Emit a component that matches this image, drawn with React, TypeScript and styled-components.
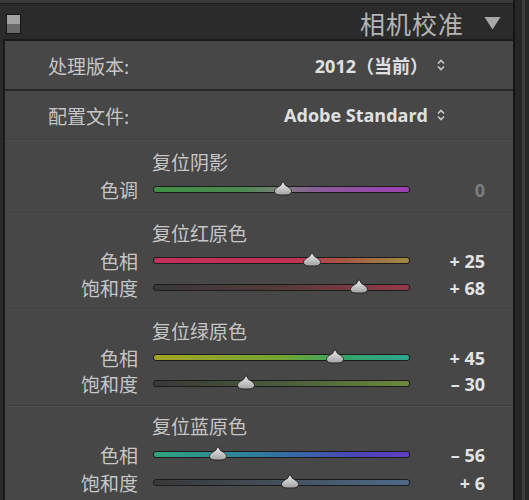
import React from 'react';
import styled, { createGlobalStyle } from 'styled-components';

const Global = createGlobalStyle`
  html, body { margin: 0; padding: 0; background: #2a2a2a; }
  body { width: 529px; height: 500px; overflow: hidden; font-family: "Noto Sans CJK SC", "Noto Sans", sans-serif; }
`;

const Frame = styled.div`
  width: 529px;
  height: 500px;
  display: flex;
  background: #2a2a2a;
  overflow: hidden;
`;

const Main = styled.div`
  width: 513px;
  display: flex;
  flex-direction: column;
`;

const Gutter = styled.div`
  flex: 1;
  background: #262626;
  border-left: 2px solid #151515;
  display: flex;
  justify-content: center;
`;

const GutterStripe = styled.div`
  width: 3px;
  margin-left: 2px;
  background: #3c3c3c;
`;

const TopStrip = styled.div`
  height: 3px;
  background: #3a3a3a;
  border-bottom: 1px solid #1c1c1c;
`;

const Header = styled.div`
  height: 35px;
  display: flex;
  align-items: center;
  padding: 0 8px 0 6px;
  background: #2b2b2b;
`;

const PanelIcon = styled.div`
  width: 13px;
  height: 18px;
  border: 1px solid #161616;
  display: flex;
  flex-direction: column;
  margin-top: 4px;
`;

const IconHalf = styled.div<{ $tone: string }>`
  flex: 1;
  background: ${(p) => p.$tone};
`;

const Title = styled.div`
  margin-left: auto;
  padding-top: 4px;
  font-size: 25px;
  line-height: 31px;
  color: #b4b4b4;
  letter-spacing: 1px;
`;

const Collapse = styled.svg`
  width: 17px;
  height: 14px;
  margin-left: 20px;
  margin-right: 4px;
  margin-top: 2px;
`;

const Panel = styled.div`
  flex: 1;
  margin-left: 3px;
  border-left: 2px solid #1a1a1a;
  border-top: 2px solid #1a1a1a;
  background: #474747;
  display: flex;
  flex-direction: column;
`;

const SettingRow = styled.div<{ $line: string }>`
  height: 48px;
  display: flex;
  align-items: center;
  justify-content: space-between;
  padding: 0 68px 0 43px;
  border-bottom: ${(p) => p.$line};
`;

const Label = styled.div`
  font-size: 19px;
  color: #c6c6c6;
`;

const Value = styled.div`
  display: flex;
  align-items: center;
  gap: 9px;
  font-family: "Open Sans", "Noto Sans CJK SC", sans-serif;
  font-weight: 700;
  font-size: 18px;
  color: #e0e0e0;
`;

const Stepper = styled.svg`
  width: 8px;
  height: 12px;
`;

const Section = styled.div<{ $top: number; $gap: number; $bottom: number; $last?: boolean }>`
  padding-top: ${(p) => p.$top}px;
  padding-bottom: ${(p) => p.$bottom}px;
  display: flex;
  flex-direction: column;
  gap: ${(p) => p.$gap}px;
  border-bottom: ${(p) => (p.$last ? 'none' : '1px solid #3e3e3e')};
  box-shadow: inset 0 1px 0 #4f4f4f;
`;

const SectionTitle = styled.div`
  height: 26px;
  line-height: 26px;
  padding-left: 147px;
  font-size: 19px;
  color: #c6c6c6;
`;

const SliderList = styled.div<{ $gap: number }>`
  display: flex;
  flex-direction: column;
  gap: ${(p) => p.$gap}px;
`;

const SliderRow = styled.div`
  height: 26px;
  display: grid;
  grid-template-columns: 133px 257px 1fr;
  column-gap: 15px;
  align-items: center;
`;

const SliderLabel = styled.div`
  text-align: right;
  font-size: 19px;
  color: #c6c6c6;
`;

const Track = styled.div<{ $bg: string }>`
  position: relative;
  height: 5px;
  border-radius: 3px;
  border: 1px solid #1c1c1c;
  background: ${(p) => p.$bg};
`;

const Thumb = styled.svg`
  position: absolute;
  top: -7px;
  width: 20px;
  height: 16px;
  margin-left: -10px;
`;

const SliderValue = styled.div<{ $dim?: boolean }>`
  text-align: right;
  padding-right: 28px;
  font-family: "Open Sans", sans-serif;
  font-weight: 700;
  font-size: 18px;
  color: ${(p) => (p.$dim ? '#7c7c7c' : '#e2e2e2')};
`;

type Slider = { label: string; pos: number; value: string; bg: string; dim?: boolean };
type Group = { title: string; top: number; gap: number; rowGap: number; bottom: number; sliders: Slider[] };

const groups: Group[] = [
  {
    title: '复位阴影',
    top: 9,
    gap: 1,
    rowGap: 0,
    bottom: 10,
    sliders: [
      {
        label: '色调',
        pos: 130,
        value: '0',
        dim: true,
        bg: 'linear-gradient(90deg, #3f8f45 0%, #4c8a4f 35%, #7d7d7d 50%, #8a5a98 65%, #9c40b4 100%)',
      },
    ],
  },
  {
    title: '复位红原色',
    top: 7,
    gap: 1,
    rowGap: 1,
    bottom: 8,
    sliders: [
      {
        label: '色相',
        pos: 159,
        value: '+ 25',
        bg: 'linear-gradient(90deg, #c2305c 0%, #c03252 55%, #a45a42 75%, #a08a44 100%)',
      },
      {
        label: '饱和度',
        pos: 207,
        value: '+ 68',
        bg: 'linear-gradient(90deg, #383838 0%, #553a3c 50%, #96384a 100%)',
      },
    ],
  },
  {
    title: '复位绿原色',
    top: 9,
    gap: 0,
    rowGap: 0,
    bottom: 9,
    sliders: [
      {
        label: '色相',
        pos: 182,
        value: '+ 45',
        bg: 'linear-gradient(90deg, #a2a424 0%, #74a432 50%, #34a466 75%, #2ea690 100%)',
      },
      {
        label: '饱和度',
        pos: 93,
        value: '– 30',
        bg: 'linear-gradient(90deg, #383838 0%, #4c5a3c 50%, #6a8a3c 100%)',
      },
    ],
  },
  {
    title: '复位蓝原色',
    top: 7,
    gap: 2,
    rowGap: 2,
    bottom: 0,
    sliders: [
      {
        label: '色相',
        pos: 64,
        value: '– 56',
        bg: 'linear-gradient(90deg, #2fa47e 0%, #2f78a0 45%, #4c44b4 80%, #6040c2 100%)',
      },
      {
        label: '饱和度',
        pos: 137,
        value: '+ 6',
        bg: 'linear-gradient(90deg, #383838 0%, #44505c 50%, #4c6a8a 100%)',
      },
    ],
  },
];

const StepperIcon = () => (
  <Stepper viewBox="0 0 8 12">
    <path d="M1 4.5 L4 1.5 L7 4.5" fill="none" stroke="#c8c8c8" strokeWidth="1.6" />
    <path d="M1 7.5 L4 10.5 L7 7.5" fill="none" stroke="#c8c8c8" strokeWidth="1.6" />
  </Stepper>
);

const ThumbIcon = ({ left }: { left: number }) => (
  <Thumb viewBox="0 0 20 16" style={{ left: `${(left / 257) * 100}%` }}>
    <defs>
      <linearGradient id="tg" x1="0" y1="0" x2="0" y2="1">
        <stop offset="0" stopColor="#f0f0f0" />
        <stop offset="1" stopColor="#a2a2a2" />
      </linearGradient>
    </defs>
    <path
      d="M1.5 11.5 C1.5 8.5 5 7 7.5 5.5 L10 1.2 L12.5 5.5 C15 7 18.5 8.5 18.5 11.5 C18.5 13.8 16 15 13 15 L7 15 C4 15 1.5 13.8 1.5 11.5 Z"
      fill="url(#tg)"
      stroke="#262626"
      strokeWidth="1"
    />
  </Thumb>
);

export default function App() {
  return (
    <Frame>
      <Global />
      <Main>
        <TopStrip />
        <Header>
          <PanelIcon>
            <IconHalf $tone="#a2a2a2" />
            <IconHalf $tone="#6a6a6a" />
          </PanelIcon>
          <Title>相机校准</Title>
          <Collapse viewBox="0 0 17 14">
            <path d="M0.5 1 L16.5 1 L8.5 13.5 Z" fill="#a8a8a8" />
          </Collapse>
        </Header>
        <Panel>
          <SettingRow $line="2px solid #262626">
            <Label>处理版本:</Label>
            <Value>
              <span>2012（当前）</span>
              <StepperIcon />
            </Value>
          </SettingRow>
          <SettingRow $line="1px solid #3e3e3e">
            <Label>配置文件:</Label>
            <Value>
              <span>Adobe Standard</span>
              <StepperIcon />
            </Value>
          </SettingRow>
          {groups.map((g, gi) => (
            <Section
              key={g.title}
              $top={g.top}
              $gap={g.gap}
              $bottom={g.bottom}
              $last={gi === groups.length - 1}
            >
              <SectionTitle>{g.title}</SectionTitle>
              <SliderList $gap={g.rowGap}>
                {g.sliders.map((s) => (
                  <SliderRow key={s.label}>
                    <SliderLabel>{s.label}</SliderLabel>
                    <Track $bg={s.bg}>
                      <ThumbIcon left={s.pos} />
                    </Track>
                    <SliderValue $dim={s.dim}>{s.value}</SliderValue>
                  </SliderRow>
                ))}
              </SliderList>
            </Section>
          ))}
        </Panel>
      </Main>
      <Gutter>
        <GutterStripe />
      </Gutter>
    </Frame>
  );
}
